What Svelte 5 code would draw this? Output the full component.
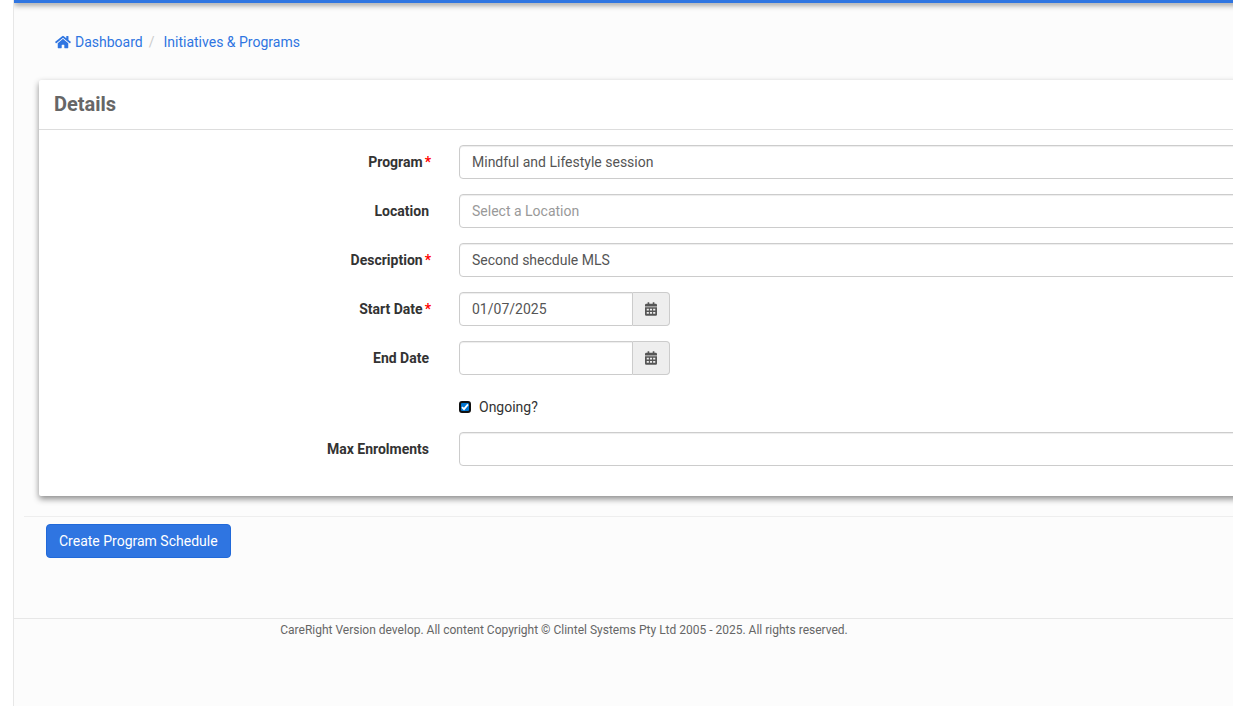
<script lang="ts">
  type Field = {
    id: string;
    label: string;
    kind: 'text' | 'date' | 'checkbox';
    required?: boolean;
    placeholder?: string;
  };

  const fields: Field[] = [
    { id: 'program', label: 'Program', kind: 'text', required: true },
    { id: 'location', label: 'Location', kind: 'text', placeholder: 'Select a Location' },
    { id: 'description', label: 'Description', kind: 'text', required: true },
    { id: 'start_date', label: 'Start Date', kind: 'date', required: true },
    { id: 'end_date', label: 'End Date', kind: 'date' },
    { id: 'ongoing', label: 'Ongoing?', kind: 'checkbox' },
    { id: 'max_enrolments', label: 'Max Enrolments', kind: 'text' },
  ];

  let values = $state<Record<string, string>>({
    program: 'Mindful and Lifestyle session',
    location: '',
    description: 'Second shecdule MLS',
    start_date: '01/07/2025',
    end_date: '',
    max_enrolments: '',
  });
  let ongoing = $state(true);
</script>

<div class="page">
  <div class="topbar"></div>

  <nav class="breadcrumb" aria-label="Breadcrumb">
    <a href="#dashboard">
      <svg class="home" viewBox="0 0 576 512" aria-hidden="true">
        <path
          d="M280 148 96 300v164a16 16 0 0 0 16 16h112a16 16 0 0 0 16-16v-96a16 16 0 0 1 16-16h64a16 16 0 0 1 16 16v96a16 16 0 0 0 16 16h112a16 16 0 0 0 16-16V300L296 148a12 12 0 0 0-16 0zM572 251l-84-69V44a12 12 0 0 0-12-12h-56a12 12 0 0 0-12 12v72l-90-74a48 48 0 0 0-61 0L4 251a12 12 0 0 0-1 17l25 31a12 12 0 0 0 17 2L280 107a12 12 0 0 1 16 0l235 194a12 12 0 0 0 17-2l25-31a12 12 0 0 0-1-17z"
        />
      </svg>
      Dashboard
    </a>
    <span class="divider">/</span>
    <a href="#initiatives">Initiatives &amp; Programs</a>
  </nav>

  <form onsubmit={(e) => e.preventDefault()}>
    <section class="panel">
      <h2>Details</h2>
      <div class="panel-body">
        {#each fields as field (field.id)}
          <div class="row">
            {#if field.kind === 'checkbox'}
              <label class="check">
                <input type="checkbox" id={field.id} bind:checked={ongoing} />
                {field.label}
              </label>
            {:else}
              <label class="name" class:required={field.required} for={field.id}>
                {field.label}{#if field.required}<abbr title="required">*</abbr>{/if}
              </label>
              {#if field.kind === 'date'}
                <div class="date">
                  <input type="text" id={field.id} bind:value={values[field.id]} />
                  <button type="button" aria-label="Pick {field.label}">
                    <svg viewBox="0 0 448 512" aria-hidden="true">
                      <path
                        fill-rule="evenodd"
                        d="M0 192h448v272a48 48 0 0 1-48 48H48a48 48 0 0 1-48-48zM64 242v68h80v-68zM184 242v68h80v-68zM304 242v68h80v-68zM64 366v68h80v-68zM184 366v68h80v-68zM304 366v68h80v-68zM448 160H0v-48a48 48 0 0 1 48-48h48V12a12 12 0 0 1 12-12h40a12 12 0 0 1 12 12v52h128V12a12 12 0 0 1 12-12h40a12 12 0 0 1 12 12v52h48a48 48 0 0 1 48 48z"
                      />
                    </svg>
                  </button>
                </div>
              {:else}
                <input
                  type="text"
                  id={field.id}
                  placeholder={field.placeholder}
                  bind:value={values[field.id]}
                />
              {/if}
            {/if}
          </div>
        {/each}
      </div>
    </section>

    <div class="actions">
      <button type="submit">Create Program Schedule</button>
    </div>
  </form>

  <footer>
    CareRight Version develop. All content Copyright © Clintel Systems Pty Ltd 2005 - 2025. All
    rights reserved.
  </footer>
</div>

<style>
  :global(body) {
    margin: 0;
    background: #fff;
  }

  .page {
    box-sizing: border-box;
    min-height: 100vh;
    margin-left: 13px;
    border-left: 1px solid #e7e7e7;
    background: #fcfcfc;
    color: #333;
    font: 14px/20px Roboto, sans-serif;
    overflow: hidden;
  }

  .topbar {
    height: 3px;
    margin-right: -24px;
    background: #2f75e1;
    box-shadow: 0 1px 6px rgba(0, 0, 0, 0.75);
  }

  a {
    color: #2f75e1;
    text-decoration: none;
  }

  .breadcrumb {
    display: flex;
    padding: 29px 41px 28px;
  }

  .breadcrumb a {
    display: flex;
    align-items: center;
    gap: 4px;
  }

  .home {
    width: 16px;
    height: 14px;
    fill: currentColor;
  }

  .divider {
    padding: 0 9px 0 6px;
    color: #ccc;
  }

  /* the panel runs on past the right edge */
  .panel {
    margin: 0 -24px 20px 25px;
    border-radius: 2px;
    background: #fff;
    box-shadow: 0 3px 6px rgba(0, 0, 0, 0.45);
  }

  h2 {
    margin: 0;
    padding: 12px 15px 13px;
    border-bottom: 1px solid #ddd;
    color: #666;
    font-size: 20px;
    line-height: 24px;
    font-weight: 700;
  }

  .panel-body {
    display: flex;
    flex-direction: column;
    gap: 15px;
    padding: 15px 15px 30px;
  }

  .row {
    display: grid;
    grid-template-columns: 375px 1fr;
    column-gap: 30px;
  }

  .name {
    padding-top: 7px;
    text-align: right;
    font-weight: 700;
  }

  /* the star hangs slightly into the gutter */
  .required {
    margin-right: -2px;
  }

  abbr {
    padding-left: 2px;
    color: #f00;
    text-decoration: none;
  }

  input[type='text'] {
    box-sizing: border-box;
    width: 100%;
    min-width: 0;
    height: 34px;
    margin: 0;
    padding: 6px 12px;
    border: 1px solid #ccc;
    border-radius: 4px;
    background: #fff;
    box-shadow: inset 0 1px 1px rgba(0, 0, 0, 0.075);
    color: #555;
    font: inherit;
  }

  input::placeholder {
    color: #999;
    opacity: 1;
  }

  .date {
    display: flex;
    width: 211px;
  }

  .date input[type='text'] {
    flex: 1;
    border-radius: 4px 0 0 4px;
  }

  .date button {
    display: flex;
    align-items: center;
    justify-content: center;
    width: 37px;
    padding: 0;
    border: 1px solid #ccc;
    border-left: 0;
    border-radius: 0 4px 4px 0;
    background: #eee;
  }

  .date svg {
    width: 12px;
    height: 14px;
    fill: #555;
  }

  .check {
    grid-column: 2;
    display: flex;
    align-items: center;
    gap: 8px;
    padding-top: 7px;
  }

  .check input {
    appearance: none;
    box-sizing: border-box;
    width: 12px;
    height: 12px;
    margin: 0;
    border: 2px solid #101010;
    border-radius: 3px;
    background: #0075d0
      url("data:image/svg+xml,%3Csvg xmlns='http://www.w3.org/2000/svg' viewBox='0 0 8 8'%3E%3Cpath d='M1 4.2 3 6.2 7 1.4' fill='none' stroke='white' stroke-width='1.8'/%3E%3C/svg%3E");
  }

  .check input:not(:checked) {
    background: #fff;
  }

  .actions {
    margin-left: 10px;
    padding: 7px 22px 60px;
    border-top: 1px solid #eee;
  }

  .actions button {
    height: 34px;
    padding: 0 12px;
    border: 1px solid #2169d9;
    border-radius: 4px;
    background: #2f75e1;
    color: #fff;
    font: inherit;
  }

  footer {
    padding: 1px 119px 0 0;
    border-top: 1px solid #e7e7e7;
    color: #666;
    font-size: 12px;
    text-align: center;
  }
</style>
